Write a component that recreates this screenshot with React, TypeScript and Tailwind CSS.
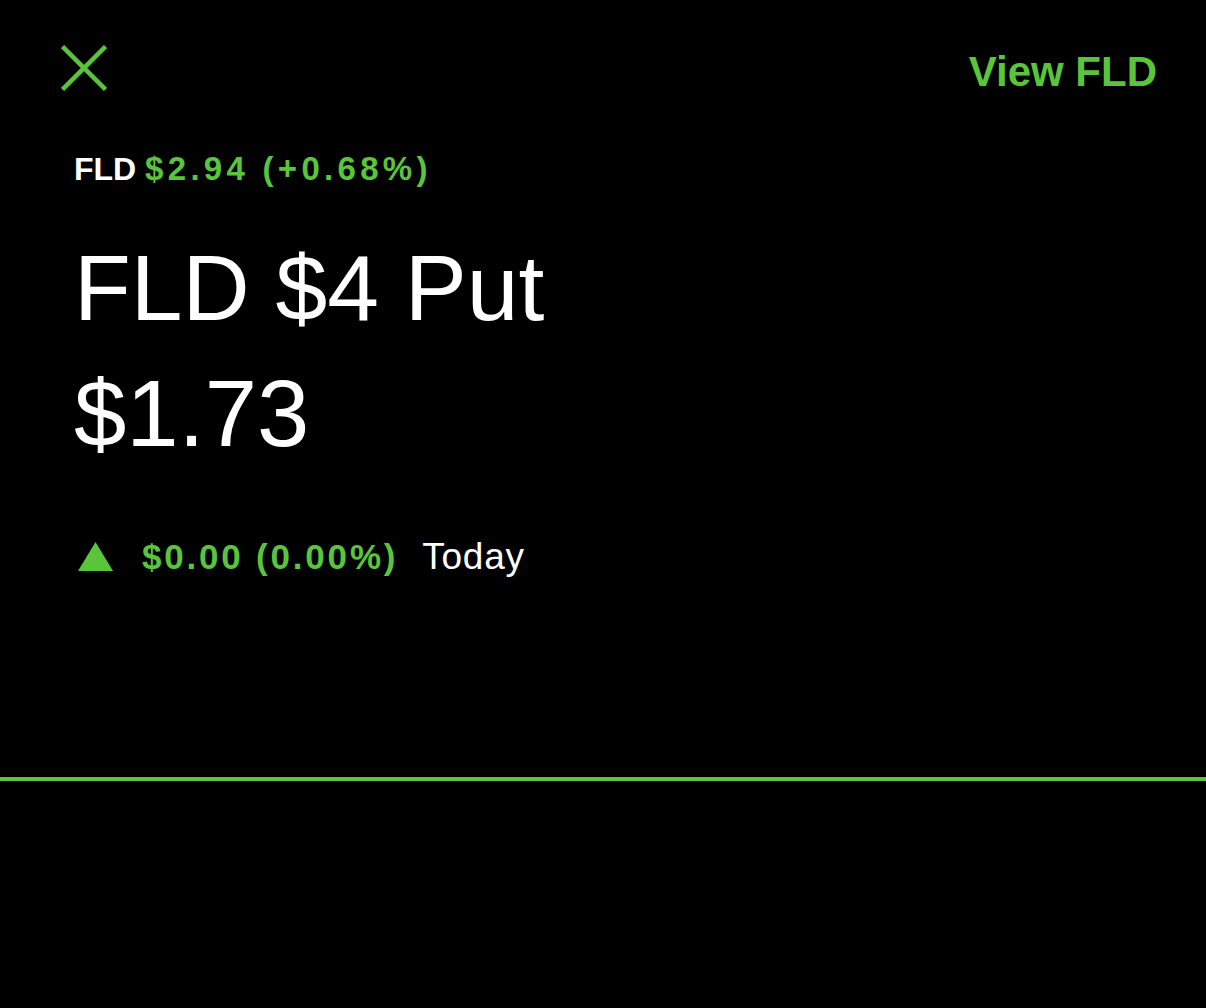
export default function App() {
  return (
    <div className="min-h-screen bg-black text-white font-['Liberation_Sans',Arial,sans-serif]">
      {/* header */}
      <header className="flex items-start justify-between pl-[61px] pr-[49px] pt-[45px]">
        <svg width="46" height="46" viewBox="0 0 46 46" fill="none" stroke="#5ac53b" strokeWidth="4.5">
          <line x1="1.5" y1="1.5" x2="44.5" y2="44.5" />
          <line x1="44.5" y1="1.5" x2="1.5" y2="44.5" />
        </svg>
        <span className="mt-[6px] text-[42px] leading-none font-bold text-[#5ac53b]">View FLD</span>
      </header>

      <section className="pl-[74px]">
        {/* underlying */}
        <p className="mt-[59px] text-[32px] leading-none whitespace-nowrap">
          <span className="font-bold">FLD</span>{" "}
          <span className="text-[33px] font-semibold text-[#5ac53b] tracking-[0.13em]">$2.94 (+0.68%)</span>
        </p>

        {/* contract */}
        <h1 className="mt-[57px] text-[93px] leading-none font-normal">FLD $4 Put</h1>
        <p className="mt-[32px] text-[94px] leading-none">$1.73</p>

        {/* today change */}
        <div className="mt-[77px] flex items-center">
          <svg width="35" height="29" viewBox="0 0 35 29" className="ml-[4px]">
            <polygon points="17.5,0 35,29 0,29" fill="#5ac53b" />
          </svg>
          <span className="ml-[29px] text-[35px] leading-none font-semibold text-[#5ac53b] tracking-[0.08em]">
            $0.00 (0.00%)
          </span>
          <span className="ml-[24px] text-[37px] leading-none tracking-[0.02em]">Today</span>
        </div>
      </section>

      {/* chart baseline */}
      <div className="mt-[202px] h-[4px] w-full bg-[#5ac53b]" />
    </div>
  );
}
